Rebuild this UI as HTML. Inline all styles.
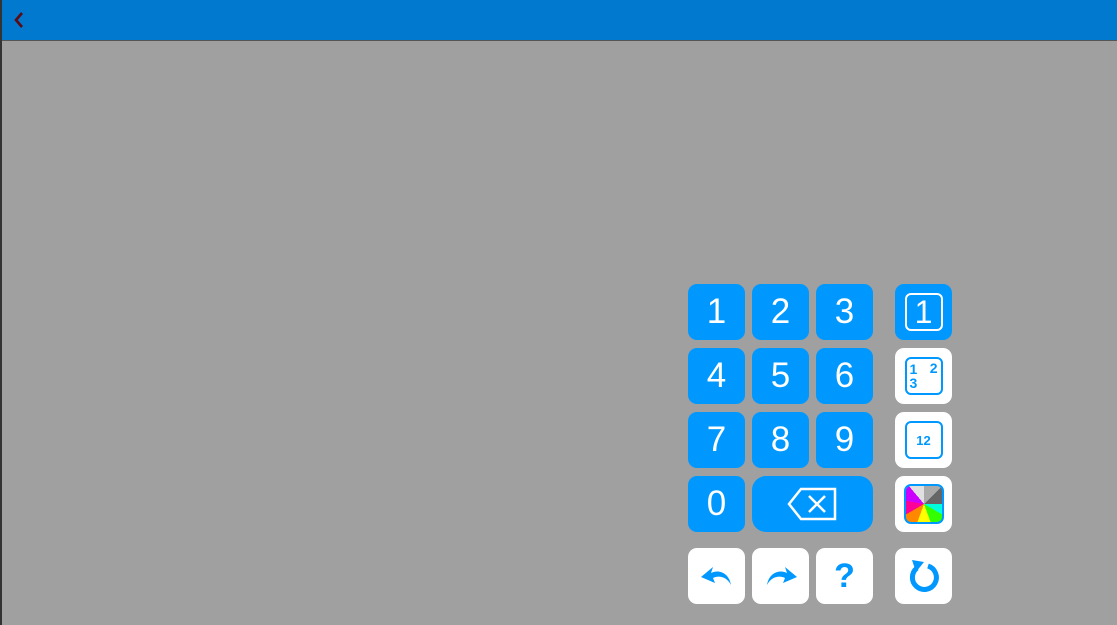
<!DOCTYPE html>
<html><head><style>
body{margin:0;width:1117px;height:625px;background:#a0a0a0;position:relative;overflow:hidden;font-family:"Liberation Sans",sans-serif}
.bar{position:absolute;left:0;top:0;width:1117px;height:40px;background:#0079cf;border-bottom:1px solid #555}
.lb{position:absolute;left:0;top:0;width:2px;height:625px;background:#333}
.b{position:absolute;width:57px;height:56px;border-radius:9px;background:#0098ff;color:#fff;font-size:35px;display:flex;align-items:center;justify-content:center}
.w{background:#fff}
</style></head><body>
<div class="bar"></div><div class="lb"></div>
<svg style="position:absolute;left:12px;top:9px" width="14" height="22"><path d="M10 4 L4 11 L10 18" stroke="#5a0a10" stroke-width="2.6" fill="none"/></svg>
<div class="b" style="left:688px;top:284px">1</div>
<div class="b" style="left:752px;top:284px">2</div>
<div class="b" style="left:816px;top:284px">3</div>
<div class="b" style="left:688px;top:348px">4</div>
<div class="b" style="left:752px;top:348px">5</div>
<div class="b" style="left:816px;top:348px">6</div>
<div class="b" style="left:688px;top:412px">7</div>
<div class="b" style="left:752px;top:412px">8</div>
<div class="b" style="left:816px;top:412px">9</div>
<div class="b" style="left:688px;top:476px">0</div>
<div class="b" style="left:752px;top:476px;width:121px;border-radius:14px">
<svg width="52" height="34"><path d="M14 2 H48 V32 H14 L2 17 Z" stroke="#fff" stroke-width="2.5" fill="none"/><path d="M22 9 L38 25 M38 9 L22 25" stroke="#fff" stroke-width="2.5"/></svg></div>
<div class="b" style="left:895px;top:284px"><div style="width:38px;height:38px;border:2.5px solid #fff;border-radius:6px;box-sizing:border-box;display:flex;align-items:center;justify-content:center;font-size:32px">1</div></div>
<div class="b w" style="left:895px;top:348px"><div style="width:38px;height:38px;border:2.5px solid #0098ff;border-radius:6px;box-sizing:border-box;position:relative;color:#0098ff;font-size:14px;font-weight:bold"><span style="position:absolute;left:3px;top:2px">1</span><span style="position:absolute;right:3px;top:1px">2</span><span style="position:absolute;left:3px;top:16px">3</span></div></div>
<div class="b w" style="left:895px;top:412px"><div style="width:38px;height:38px;border:2.5px solid #0098ff;border-radius:6px;box-sizing:border-box;display:flex;align-items:center;justify-content:center;color:#0098ff;font-size:13px;font-weight:bold">12</div></div>
<div class="b w" style="left:895px;top:476px"><div style="width:40px;height:40px;border:2.5px solid #0098ff;border-radius:7px;box-sizing:border-box;background:conic-gradient(#aaa 0deg 45deg,#666 45deg 90deg,#00ffdd 90deg 120deg,#33ff00 120deg 160deg,#ffff00 160deg 200deg,#ff8800 200deg 240deg,#ff0099 240deg 280deg,#cc00ff 280deg 320deg,#e0e0e0 320deg 360deg)"></div></div>
<div class="b w" style="left:688px;top:548px"><svg width="36" height="30"><path d="M32 24 C30 12 20 8 12 12 L14 6 L2 16 L16 22 L14 17 C20 14 28 16 32 24Z" fill="#0098ff"/></svg></div>
<div class="b w" style="left:752px;top:548px"><svg width="36" height="30"><path d="M4 24 C6 12 16 8 24 12 L22 6 L34 16 L20 22 L22 17 C16 14 8 16 4 24Z" fill="#0098ff"/></svg></div>
<div class="b w" style="left:816px;top:548px;color:#0098ff;font-weight:bold;font-size:34px">?</div>
<div class="b w" style="left:895px;top:548px"><svg width="36" height="40"><path d="M11 12 A12 12 0 1 0 22 10" stroke="#0098ff" stroke-width="5" fill="none"/><path d="M6 4 L18 6 L10 16 Z" fill="#0098ff"/></svg></div>
</body></html>
